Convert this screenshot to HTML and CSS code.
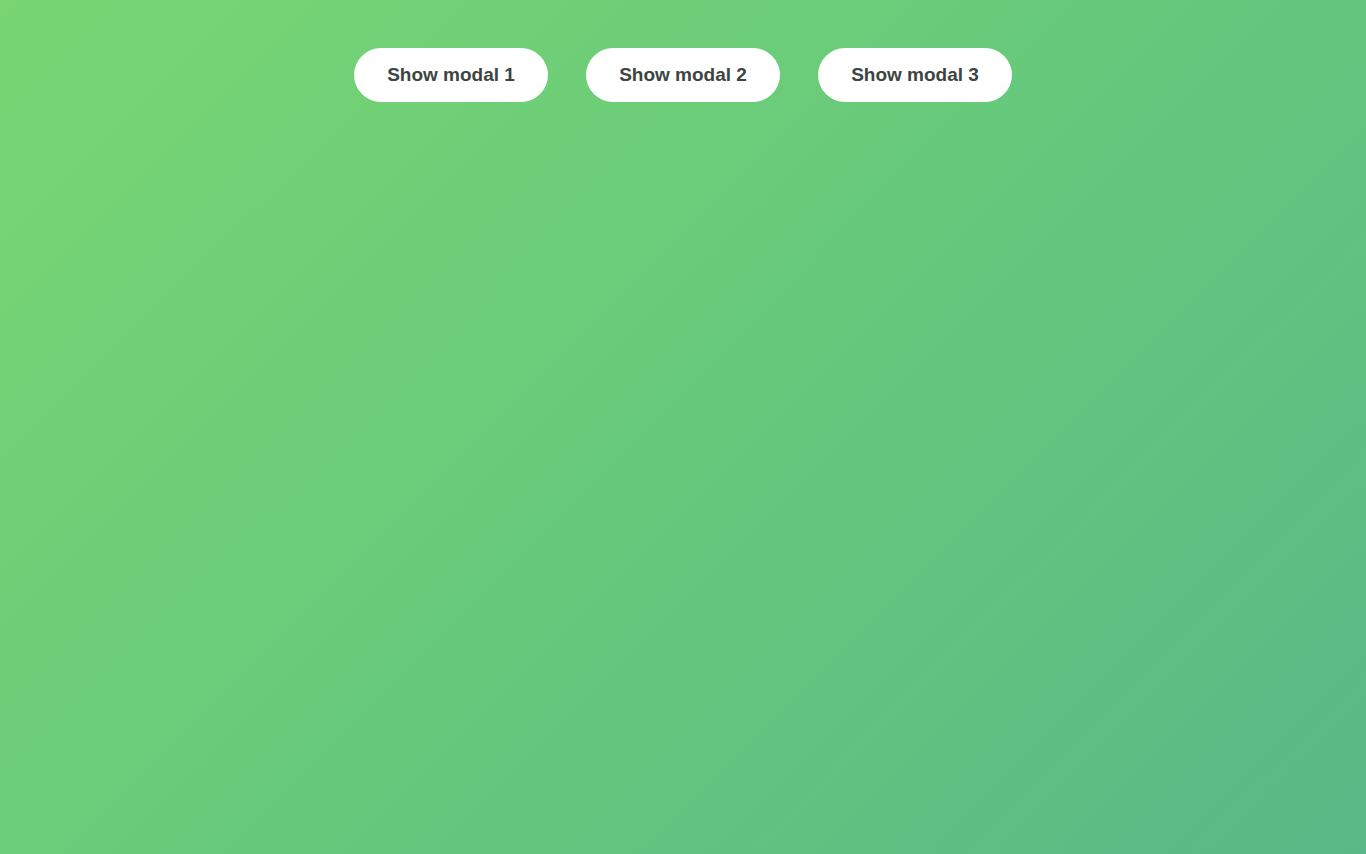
FILE: index.html
```html
<!DOCTYPE html>
<html>
<head>
<meta charset="utf-8">
<link rel="stylesheet" href="styles.css">
</head>
<body>
<div class="bar">
  <button class="btn">Show modal 1</button>
  <button class="btn">Show modal 2</button>
  <button class="btn">Show modal 3</button>
</div>
</body>
</html>
```
FILE: styles.css
```css
html, body {
  margin: 0;
  height: 100%;
}
body {
  background: linear-gradient(135deg, #79d673 0%, #67c97b 50%, #59b887 100%);
  font-family: "Liberation Sans", Arial, sans-serif;
}
.bar {
  display: flex;
  justify-content: center;
  gap: 38px;
  padding-top: 48px;
}
.btn {
  width: 194px;
  height: 54px;
  border: none;
  border-radius: 27px;
  background: #fff;
  color: #3c453f;
  font-family: "Liberation Sans", Arial, sans-serif;
  font-weight: bold;
  font-size: 19px;
  padding: 0;
  cursor: pointer;
}
```
